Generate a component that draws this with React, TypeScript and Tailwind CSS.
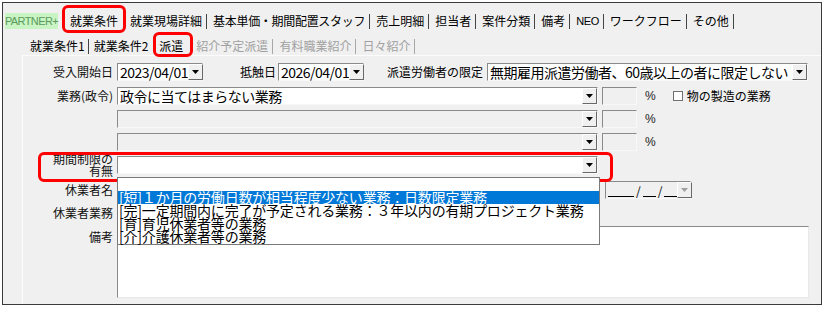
import React from "react";

const Sep = ({ gray, wide }: { gray?: boolean; wide?: boolean }) => (
  <span
    className={`${wide ? "ml-[4px] mr-[6px]" : "ml-[3px] mr-[5px]"} w-px h-[15px] ${
      gray ? "bg-[#a8a8a8]" : "bg-[#444]"
    }`}
  />
);

const DropBtn = ({ disabled }: { disabled?: boolean }) => (
  <div className="w-[15px] h-[16px] shrink-0 bg-[#f0f0f0] border border-t-[#fff] border-l-[#fff] border-b-[#696969] border-r-[#696969] flex items-center justify-center">
    <svg width="7" height="4" viewBox="0 0 7 4">
      <path d="M0 0h7L3.5 4z" fill={disabled ? "#a0a0a0" : "#000"} />
    </svg>
  </div>
);

const Field = ({
  className,
  children,
  white = true,
  button = true,
  disabledBtn,
}: {
  className?: string;
  children?: React.ReactNode;
  white?: boolean;
  button?: boolean;
  disabledBtn?: boolean;
}) => (
  <div
    className={`h-[18px] flex items-center border border-t-[#8a8a8a] border-l-[#8a8a8a] border-b-[#f8f8f8] border-r-[#f8f8f8] ${
      white ? "bg-white" : "bg-[#f0f0f0]"
    } ${className ?? ""}`}
  >
    <div className="flex-1 h-full flex items-center pl-[2px] text-[14px] leading-[16px] tracking-[-0.5px] text-black whitespace-nowrap">
      {children}
    </div>
    {button && <DropBtn disabled={disabledBtn} />}
  </div>
);

const Label = ({ children }: { children?: React.ReactNode }) => (
  <div className="w-[90px] shrink-0 text-right text-[12px] leading-[18px] text-[#111]">{children}</div>
);

const Pct = () => (
  <span className="ml-[8px] text-[12px] font-['Liberation_Sans',sans-serif] text-[#222]">%</span>
);

const RedBox = ({ className }: { className: string }) => (
  <div className={`absolute border-[3px] border-[#f00] rounded-[6px] pointer-events-none ${className}`} />
);

export default function App() {
  return (
    <div className="relative w-[824px] h-[309px] bg-white p-[2px] font-['Noto_Sans_CJK_JP',sans-serif] text-black">
      <div className="w-[820px] h-[303px] border border-[#3a3a3a] bg-[#f0f0f0] flex flex-col">
        {/* top tabs */}
        <div className="mt-[10px] ml-[2px] h-[16px] flex items-center text-[12px] leading-[16px] whitespace-nowrap">
          <div className="w-[53px] h-[16px] bg-[#c8f5c3] text-[#5b9a5b] text-[11px] font-['Liberation_Sans',sans-serif] flex items-center justify-center tracking-[-0.6px]">
            PARTNER+
          </div>
          <span className="ml-[12px]">就業条件</span>
          <span className="ml-[12px]">就業現場詳細</span>
          <Sep wide />
          <span className="tracking-[-0.3px]">基本単価・期間配置スタッフ</span>
          <Sep wide />
          <span>売上明細</span>
          <Sep wide />
          <span>担当者</span>
          <Sep wide />
          <span>案件分類</span>
          <Sep wide />
          <span>備考</span>
          <Sep wide />
          <span className="font-['Liberation_Sans',sans-serif] text-[11px] tracking-[-0.4px]">NEO</span>
          <Sep wide />
          <span>ワークフロー</span>
          <Sep wide />
          <span>その他</span>
          <Sep wide />
        </div>

        {/* sub tabs */}
        <div className="mt-[9px] ml-[27px] h-[16px] flex items-center text-[12px] leading-[16px] whitespace-nowrap">
          <span>就業条件1</span>
          <Sep />
          <span>就業条件2</span>
          <span className="ml-[11px]">派遣</span>
          <span className="ml-[13px] text-[#a0a0a0]">紹介予定派遣</span>
          <Sep gray wide />
          <span className="text-[#a0a0a0]">有料職業紹介</span>
          <Sep gray wide />
          <span className="text-[#a0a0a0]">日々紹介</span>
          <Sep gray wide />
        </div>

        {/* panel */}
        <div className="mt-[1px] ml-[19px] flex-1 border-t border-l border-[#fcfcfc] pt-[7px] flex flex-col">
          {/* row 1 */}
          <div className="h-[18px] flex items-center">
            <Label>受入開始日</Label>
            <Field className="ml-[4px] w-[86px]">2023/04/01</Field>
            <span className="ml-[37px] text-[12px] leading-[18px]">抵触日</span>
            <Field className="ml-[2px] w-[86px]">2026/04/01</Field>
            <span className="ml-[23px] text-[12px] leading-[18px]">派遣労働者の限定</span>
            <Field className="ml-[4px] w-[321px]">無期雇用派遣労働者、60歳以上の者に限定しない</Field>
          </div>

          {/* row 2 */}
          <div className="mt-[6px] h-[18px] flex items-center">
            <Label>業務(政令)</Label>
            <Field className="ml-[4px] w-[481px]">政令に当てはまらない業務</Field>
            <Field className="ml-[4px] w-[35px]" white={false} button={false} />
            <Pct />
            <div className="ml-[17px] w-[10px] h-[10px] bg-white border border-[#707070]" />
            <span className="ml-[4px] text-[12px] leading-[18px]">物の製造の業務</span>
          </div>

          {/* row 3 */}
          <div className="mt-[5px] h-[18px] flex items-center">
            <Label />
            <Field className="ml-[4px] w-[481px]" white={false} />
            <Field className="ml-[4px] w-[35px]" white={false} button={false} />
            <Pct />
          </div>

          {/* row 4 */}
          <div className="mt-[5px] h-[18px] flex items-center">
            <Label />
            <Field className="ml-[4px] w-[481px]" white={false} />
            <Field className="ml-[4px] w-[35px]" white={false} button={false} />
            <Pct />
          </div>

          {/* row 5 */}
          <div className="relative mt-[5px] h-[18px] flex items-center">
            <div className="w-[90px] shrink-0 text-right text-[12px] leading-[12.5px] text-[#111]">
              <div>期間制限の</div>
              <div>有無</div>
            </div>
            <Field className="ml-[4px] w-[481px]" />
            {/* dropdown list */}
            <div className="absolute left-[94px] top-[21px] w-[483px] h-[68px] bg-white border border-[#7a7a7a] z-10 text-[14px] leading-[13px] tracking-[-0.2px] whitespace-nowrap">
              <div className="h-[13px]" />
              <div className="h-[13px] pl-[1px] bg-[#0078d7] text-white">[短]１か月の労働日数が相当程度少ない業務：日数限定業務</div>
              <div className="h-[13px] pl-[1px]">[完]一定期間内に完了が予定される業務：３年以内の有期プロジェクト業務</div>
              <div className="h-[13px] pl-[1px]">[育]育児休業者等の業務</div>
              <div className="h-[13px] pl-[1px]">[介]介護休業者等の業務</div>
            </div>
          </div>

          {/* row 6 */}
          <div className="mt-[7px] h-[18px] flex items-center">
            <Label>休業者名</Label>
            <Field className="ml-[492px] w-[86px]" white={false} disabledBtn>
              <div className="flex items-end h-[14px] text-[12px] leading-[12px] tracking-normal">
                <span className="w-[26px] border-b border-black" />
                <span className="mx-[2px]">/</span>
                <span className="w-[13px] border-b border-black" />
                <span className="mx-[2px]">/</span>
                <span className="w-[13px] border-b border-black" />
              </div>
            </Field>
          </div>

          {/* row 7 */}
          <div className="mt-[5px] h-[18px] flex items-center">
            <Label>休業者業務</Label>
          </div>

          {/* row 8 */}
          <div className="mt-[4px] flex items-start">
            <div className="pt-[2px]">
              <Label>備考</Label>
            </div>
            <div className="ml-[4px] w-[692px] h-[72px] bg-white border border-t-[#8a8a8a] border-l-[#8a8a8a] border-b-[#e8e8e8] border-r-[#e8e8e8]" />
          </div>
        </div>
      </div>

      <RedBox className="left-[62px] top-[5px] w-[64px] h-[28px]" />
      <RedBox className="left-[153px] top-[32px] w-[40px] h-[25px]" />
      <RedBox className="left-[38px] top-[152px] w-[575px] h-[30px]" />
    </div>
  );
}
